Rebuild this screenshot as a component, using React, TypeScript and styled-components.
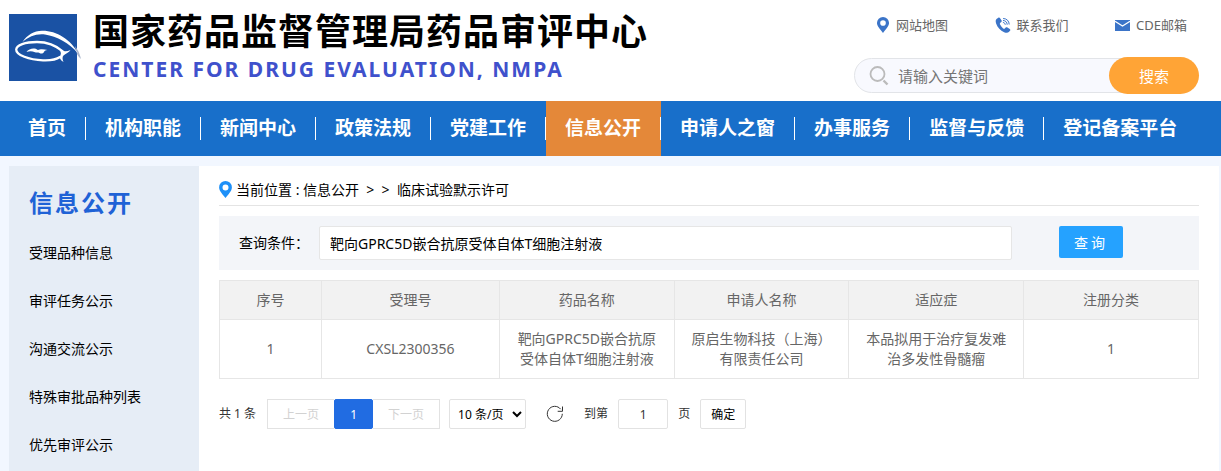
import React from 'react';
import styled, { createGlobalStyle } from 'styled-components';

const GlobalStyle = createGlobalStyle`
  *, *::before, *::after { box-sizing: border-box; }
  body {
    margin: 0;
    background: #f2f7ff;
    color: #000;
    font: 14px/20px "Noto Sans", "Noto Sans CJK SC", sans-serif;
  }
  button, input, select { font-family: inherit; margin: 0; }
  a { color: inherit; text-decoration: none; }
  h1, h2, p, ul { margin: 0; padding: 0; }
  ul { list-style: none; }
`;

const Page = styled.div`
  display: flex;
  flex-direction: column;
  min-height: 100vh;
`;

const Header = styled.header`
  display: flex;
  justify-content: space-between;
  height: 101px;
  padding: 0 22px 0 9px;
  background: #fff;
`;

const Brand = styled.a`
  display: flex;
  gap: 12px;
  padding-top: 14px;
`;

const Logo = styled.svg`
  display: block;
  width: 72px;
  height: 67px;
`;

const BrandName = styled.h1`
  display: flex;
  flex-direction: column;
  gap: 4px;
  white-space: nowrap;
`;

const ChineseName = styled.span`
  font-size: 36px;
  line-height: 36px;
  letter-spacing: 1px;
`;

const EnglishName = styled.span`
  color: #3f51cc;
  font-size: 21px;
  line-height: 30px;
  letter-spacing: 2px;
`;

const Tools = styled.div`
  display: flex;
  flex-direction: column;
  gap: 22px;
  width: 345px;
  padding-top: 15px;
`;

const ToolLinks = styled.div`
  display: flex;
  justify-content: space-between;
  padding: 0 12px 0 22px;
`;

const ToolLink = styled.a`
  display: flex;
  align-items: center;
  gap: 6px;
  color: #666;
  font-size: 13px;
`;

const SearchForm = styled.form`
  display: flex;
  align-items: center;
  height: 37px;
`;

const SearchField = styled.label`
  display: flex;
  flex: 1;
  align-items: center;
  gap: 9px;
  height: 35px;
  margin-right: -20px;
  padding-left: 14px;
  border: 1px solid #e2e4e8;
  border-radius: 18px 0 0 18px;
  background: #f8f9fe;
`;

const Keyword = styled.input`
  flex: 1;
  min-width: 0;
  padding: 0;
  border: 0;
  outline: 0;
  background: transparent;
  font-size: 15px;
  &::placeholder { color: #757575; opacity: 1; }
`;

const SearchButton = styled.button`
  position: relative;
  width: 90px;
  height: 37px;
  padding: 0;
  border: 0;
  border-radius: 19px;
  background: #ffa436;
  color: #fff;
  font-size: 15px;
`;

const Nav = styled.nav`
  display: flex;
  height: 55px;
  padding-left: 9px;
  background: #186fca;
`;

const NavItem = styled.a<{ $active?: boolean }>`
  display: flex;
  align-items: center;
  color: #fff;
  background: ${p => (p.$active ? '#e48839' : 'transparent')};
  font-size: 19px;
  line-height: 23px;
  font-weight: 700;
  white-space: nowrap;
  span { padding: 0 19px; border-right: 1px solid #fff; }
  &:last-child span { border-right: 0; }
`;

const Body = styled.div`
  display: flex;
  flex: 1;
  margin: 10px 2px 0 9px;
`;

const Sidebar = styled.aside`
  width: 190px;
  padding: 13px 20px 0;
  background: #e6edf6;
`;

const SideTitle = styled.h2`
  margin-bottom: 2px;
  color: #1f62d6;
  font-size: 24px;
  line-height: 48px;
  letter-spacing: 2px;
`;

const SideLink = styled.a`
  display: block;
  line-height: 48px;
`;

const Main = styled.main`
  flex: 1;
  min-width: 0;
  padding: 0 20px;
  background: #fff;
`;

const Breadcrumb = styled.nav`
  display: flex;
  align-items: center;
  gap: 4px;
  height: 40px;
  padding-top: 8px;
  border-bottom: 1px solid #e4e4e4;
  white-space: pre;
`;

const QueryBar = styled.form`
  display: flex;
  align-items: flex-start;
  height: 54px;
  margin: 10px 0;
  padding: 10px 76px 10px 20px;
  background: #f3f5f9;
`;

const QueryLabel = styled.label`
  width: 80px;
  line-height: 34px;
`;

const QueryInput = styled.input`
  flex: 1;
  min-width: 0;
  height: 34px;
  margin-right: 47px;
  padding: 0 10px 1px;
  border: 1px solid #e6e6e6;
  border-radius: 2px;
  background: #fff;
  color: #000;
  font-size: 14px;
`;

const QueryButton = styled.button`
  width: 64px;
  height: 32px;
  padding: 0 0 1px;
  border: 0;
  border-radius: 2px;
  background: #25a2ff;
  color: #fff;
  font-size: 14px;
  letter-spacing: 3px;
`;

const Table = styled.table`
  width: 100%;
  table-layout: fixed;
  border-collapse: collapse;
  color: #666;
  text-align: center;
  th, td {
    padding: 9px 15px;
    border: 1px solid #e6e6e6;
    font-weight: 400;
  }
  th { background: #f2f2f2; }
`;

const Column = styled.col<{ $share: number }>`
  width: ${p => p.$share}%;
`;

const Pager = styled.div`
  display: flex;
  align-items: center;
  height: 30px;
  margin-top: 20px;
  color: #333;
  font-size: 12px;
`;

const PageGroup = styled.div`
  display: flex;
  margin: 0 9px 0 11px;
`;

const PageButton = styled.button<{ $current?: boolean }>`
  width: ${p => (p.$current ? '39px' : '67px')};
  height: 30px;
  padding: 0;
  border: 1px solid ${p => (p.$current ? '#216ce2' : '#e2e2e2')};
  border-radius: ${p => (p.$current ? '2px' : '0')};
  background: ${p => (p.$current ? '#216ce2' : '#fff')};
  color: ${p => (p.$current ? '#fff' : '#d2d2d2')};
  font-size: 12px;
  &:first-child { border-right: 0; }
  &:last-child { border-left: 0; }
`;

const PageSize = styled.select`
  width: 77px;
  height: 30px;
  padding: 0 0 0 4px;
  border: 1px solid #e2e2e2;
  border-radius: 2px;
  background: #fff;
  color: #000;
  font-size: 12px;
`;

const RefreshButton = styled.button`
  display: flex;
  margin: 0 20px;
  padding: 0;
  border: 0;
  background: none;
  color: #333;
`;

const JumpLabel = styled.label`
  display: flex;
  align-items: center;
  gap: 10px;
  margin-right: 10px;
`;

const JumpInput = styled.input`
  width: 50px;
  height: 30px;
  padding: 0;
  border: 1px solid #e2e2e2;
  border-radius: 2px;
  background: #fff;
  color: #333;
  font-size: 12px;
  text-align: center;
`;

const ConfirmButton = styled.button`
  width: 46px;
  height: 30px;
  padding: 0;
  border: 1px solid #e2e2e2;
  border-radius: 2px;
  background: #fff;
  color: #000;
  font-size: 12px;
`;

const Pin = ({ color, width, height }: { color: string; width: number; height: number }) => (
  <svg width={width} height={height} viewBox="0 0 13 17" aria-hidden="true">
    <path
      fill={color}
      fillRule="evenodd"
      d="M6.500 0A6.400 6.400 0 0 0 .1 6.400C.1 10 4 13.500 6.500 17 9 13.500 12.900 10 12.900 6.400A6.400 6.400 0 0 0 6.500 0ZM6.500 3.400a3 3 0 1 1 0 6 3 3 0 0 1 0-6Z"
    />
  </svg>
);

const Phone = () => (
  <svg width="16" height="16" viewBox="0 0 16 16" aria-hidden="true">
    <path
      fill="#3b74c8"
      d="M3.300.8 1.500 2C.4 2.900.5 4.700 1.200 6.700c1.300 3.700 4.300 7 7.900 8.500 1.900.8 3.700.9 4.700-.1l1.200-1.300c.5-.6.400-1.300-.2-1.700l-2.400-1.700c-.6-.4-1.200-.3-1.700.2l-.9 1c-.5.4-1.100.3-1.900-.4C6.800 10.200 5.800 8.900 5.100 7.500c-.4-.8-.3-1.300.2-1.700l1-.8c.5-.4.6-1 .3-1.600L5.100 1.200C4.700.5 3.900.3 3.300.8Z"
    />
    <path
      fill="none"
      stroke="#3b74c8"
      strokeLinecap="round"
      d="M8.500 1.500c3.200 0 5.600 2.500 5.700 5.600M8.400 3.500c2.200.1 3.700 1.700 3.800 3.800M8.300 5.500c1.100.1 1.800.8 1.900 1.900"
    />
  </svg>
);

const Mail = () => (
  <svg width="15" height="11" viewBox="0 0 15 11" aria-hidden="true">
    <path fill="#3b74c8" d="M0 0h15v11H0z" />
    <path fill="none" stroke="#fff" strokeWidth="1.200" d="M0 1.200 7.500 6 15 1.200" />
  </svg>
);

const Magnifier = () => (
  <svg width="20" height="20" viewBox="0 0 20 20" fill="none" stroke="#bbb" aria-hidden="true">
    <circle cx="8.500" cy="8" r="7" strokeWidth="1.800" />
    <path strokeWidth="2.400" d="m14.500 14.500 4 4" />
  </svg>
);

const Refresh = () => (
  <svg width="18" height="18" viewBox="0 0 18 18" fill="none" stroke="currentColor" aria-hidden="true">
    <path d="M16.300 8.800A7.500 7.500 0 1 1 14.700 4.200M16.500 1.500v4.800h-4.800" />
  </svg>
);

const navItems = ['首页', '机构职能', '新闻中心', '政策法规', '党建工作', '信息公开', '申请人之窗', '办事服务', '监督与反馈', '登记备案平台'];
const sideItems = ['受理品种信息', '审评任务公示', '沟通交流公示', '特殊审批品种列表', '优先审评公示'];
const columns = [
  { title: '序号', share: 10.4 },
  { title: '受理号', share: 18.2 },
  { title: '药品名称', share: 17.85 },
  { title: '申请人名称', share: 17.85 },
  { title: '适应症', share: 17.85 },
  { title: '注册分类', share: 17.85 },
];
const rows = [
  ['1', 'CXSL2300356', '靶向GPRC5D嵌合抗原受体自体T细胞注射液', '原启生物科技（上海）有限责任公司', '本品拟用于治疗复发难治多发性骨髓瘤', '1'],
];

export default function App() {
  return (
    <Page lang="zh-CN">
      <GlobalStyle />
      <Header>
        <Brand href="#">
          <Logo viewBox="0 0 72 67" aria-hidden="true">
            <path fill="#1a52a4" d="M0 0h68v67H0z" />
            <path
              fill="#a9b4cc"
              d="M66 32 68 35V40ZM68 35C70 38 71 41 72 45 70 43 69 42 68 40Z"
            />
            <path
              fill="#fff"
              d="M13.500 28C18 21 25 17 33 16.800 47 16.500 62 25.500 69 39.500 60 28.500 48 22.500 36 20.500 27 19.500 20 22.500 13.500 28Z"
            />
            <path
              fill="none"
              stroke="#fff"
              strokeWidth="2.300"
              strokeLinecap="round"
              d="M54 37.500C47 31.500 38 28 28 28 16 28 7.500 31 7.200 35.500 7 41 20 45.800 34 46.300 42 46.600 47.500 45.500 51 43"
            />
            <path
              fill="#fff"
              d="M49.500 34.500C53 37.500 57 38 61.500 36 60 38.500 56.500 39.500 54.500 41.500 53 43 53.500 45.500 54.500 48 51 46 50 43.500 51.500 41 52.500 39 51.500 37 49.500 34.500Z"
            />
            <path
              fill="#fff"
              d="M17.500 38C19 35.500 23 34 25.500 34.500 27.500 34.800 28 36 29 36 31 34.800 35 35 38.500 36 36 36.200 35.500 37 35 38 34 39.800 32 40 30.500 39 29 38 27.500 38.800 26 38.200 23 37 20.500 37 17.500 38Z"
            />
          </Logo>
          <BrandName>
            <ChineseName>国家药品监督管理局药品审评中心</ChineseName>
            <EnglishName lang="en">CENTER FOR DRUG EVALUATION, NMPA</EnglishName>
          </BrandName>
        </Brand>
        <Tools>
          <ToolLinks>
            <ToolLink href="#"><Pin color="#3b74c8" width={14} height={16} />网站地图</ToolLink>
            <ToolLink href="#"><Phone />联系我们</ToolLink>
            <ToolLink href="#"><Mail />CDE邮箱</ToolLink>
          </ToolLinks>
          <SearchForm onSubmit={e => e.preventDefault()}>
            <SearchField>
              <Magnifier />
              <Keyword placeholder="请输入关键词" aria-label="请输入关键词" />
            </SearchField>
            <SearchButton>搜索</SearchButton>
          </SearchForm>
        </Tools>
      </Header>
      <Nav>
        {navItems.map(item => (
          <NavItem key={item} href="#" $active={item === '信息公开'}><span>{item}</span></NavItem>
        ))}
      </Nav>
      <Body>
        <Sidebar>
          <SideTitle>信息公开</SideTitle>
          <ul>
            {sideItems.map(item => <li key={item}><SideLink href="#">{item}</SideLink></li>)}
          </ul>
        </Sidebar>
        <Main>
          <Breadcrumb>
            <Pin color="#1e90f8" width={13} height={17} />
            <span>当前位置 : <a href="#">信息公开</a>{'  >  >  '}<a href="#">临床试验默示许可</a></span>
          </Breadcrumb>
          <QueryBar onSubmit={e => e.preventDefault()}>
            <QueryLabel htmlFor="condition">查询条件：</QueryLabel>
            <QueryInput id="condition" defaultValue="靶向GPRC5D嵌合抗原受体自体T细胞注射液" />
            <QueryButton>查询</QueryButton>
          </QueryBar>
          <Table>
            <colgroup>{columns.map(c => <Column key={c.title} $share={c.share} />)}</colgroup>
            <thead>
              <tr>{columns.map(c => <th key={c.title} scope="col">{c.title}</th>)}</tr>
            </thead>
            <tbody>
              {rows.map(row => <tr key={row[1]}>{row.map((cell, i) => <td key={i}>{cell}</td>)}</tr>)}
            </tbody>
          </Table>
          <Pager>
            <span>共 1 条</span>
            <PageGroup>
              <PageButton type="button" disabled>上一页</PageButton>
              <PageButton type="button" $current aria-current="page">1</PageButton>
              <PageButton type="button" disabled>下一页</PageButton>
            </PageGroup>
            <PageSize aria-label="每页条数" defaultValue="10">
              <option value="10">10 条/页</option>
            </PageSize>
            <RefreshButton type="button" aria-label="刷新"><Refresh /></RefreshButton>
            <JumpLabel>到第<JumpInput defaultValue="1" />页</JumpLabel>
            <ConfirmButton type="button">确定</ConfirmButton>
          </Pager>
        </Main>
      </Body>
    </Page>
  );
}
